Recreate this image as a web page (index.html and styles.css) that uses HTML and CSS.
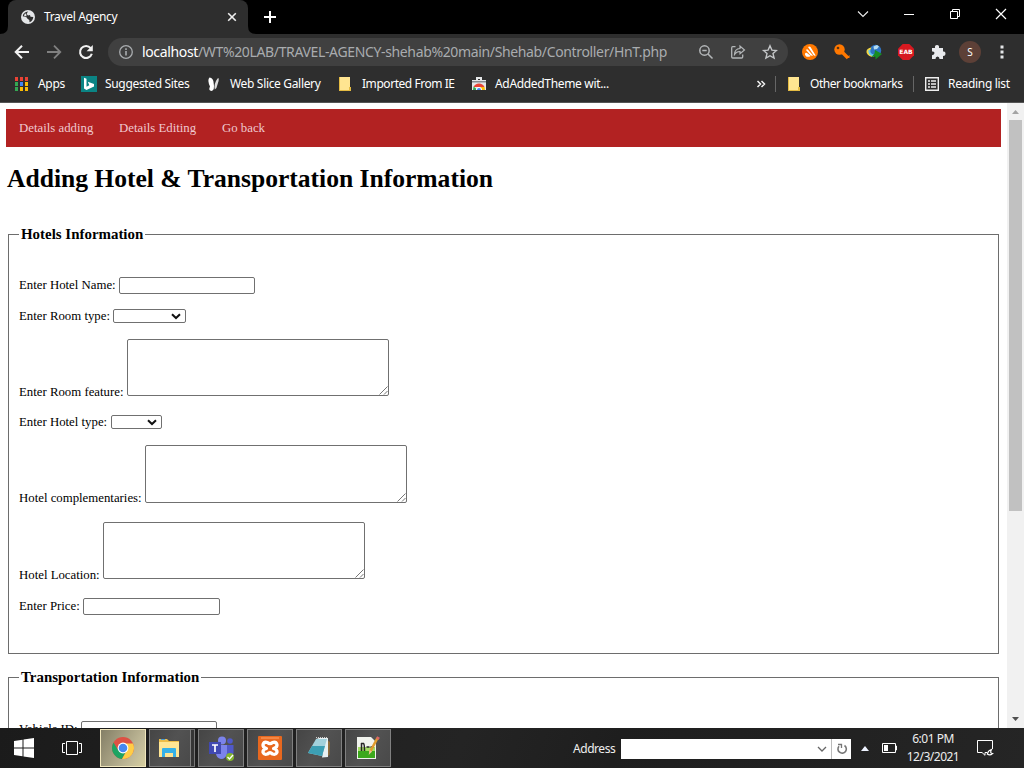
FILE: index.html
```html
<!DOCTYPE html>
<html lang="en">
<head>
<meta charset="utf-8">
<title>Travel Agency</title>
<link rel="stylesheet" href="styles.css">
</head>
<body>
<div class="screen">
  <header class="browser">
    <div class="tabs">
      <svg class="flare" width="8" height="8" viewBox="0 0 8 8"><path d="M8 0V8H0Q8 8 8 0Z" fill="#2e2e2e"/></svg>
      <div class="tab">
        <svg class="globe" width="14" height="14" viewBox="0 0 14 14"><circle cx="7" cy="7" r="7" fill="#e4e6e8"/><path d="M7.200 1.600Q4.500 4 7 5.500L9 5 9.500 6.800 12.300 7Q12 11 8.500 12.300L8.300 10 6.500 8.800 5.500 7.200 1.700 6.300Q2.300 2.200 7.200 1.600Z" fill="#2e2e2e"/><path d="M3.800 3.500 5.200 3.800 5.500 6.300 3 6.200Z" fill="#e4e6e8"/></svg>
        <span class="tab-title">Travel Agency</span>
        <svg width="10" height="10" viewBox="0 0 10 10"><path d="M1.200 1.200 8.800 8.800M8.800 1.200 1.200 8.800" stroke="#eee" stroke-width="1.600"/></svg>
      </div>
      <svg class="flare" width="8" height="8" viewBox="0 0 8 8"><path d="M0 0V8H8Q0 8 0 0Z" fill="#2e2e2e"/></svg>
      <svg class="plus" width="14" height="14" viewBox="0 0 14 14"><path d="M7 1V13M1 7H13" stroke="#fff" stroke-width="2"/></svg>
      <div class="window">
        <svg width="12" height="12" viewBox="0 0 12 12"><path d="M1 3.500 6 8.500 11 3.500" fill="none" stroke="#eee" stroke-width="1.100"/></svg>
        <svg width="12" height="12" viewBox="0 0 12 12"><path d="M1 6.500H11" stroke="#fff"/></svg>
        <svg width="12" height="12" viewBox="0 0 12 12"><path d="M1.500 3.500H8.500V10.500H1.500ZM3.500 3.500V1.500H10.500V8.500H8.500" fill="none" stroke="#fff"/></svg>
        <svg width="12" height="12" viewBox="0 0 12 12"><path d="M1 1 11 11M11 1 1 11" stroke="#fff" stroke-width="1.200"/></svg>
      </div>
    </div>
    <div class="toolbar">
      <div class="cells">
        <svg width="16" height="16" viewBox="0 0 16 16"><path d="M15 8H2.500M8 1.700 1.700 8 8 14.300" fill="none" stroke="#f1f1f1" stroke-width="2"/></svg>
        <svg width="16" height="16" viewBox="0 0 16 16"><path d="M1 8H13.500M8 1.700 14.300 8 8 14.300" fill="none" stroke="#808080" stroke-width="1.800"/></svg>
        <svg width="16" height="16" viewBox="0 0 16 16"><path d="M12.700 4.200A6 6 0 1 0 13.800 9.800" fill="none" stroke="#f1f1f1" stroke-width="2.100"/><path d="M14.800 1V7.200H8.600Z" fill="#f1f1f1"/></svg>
      </div>
      <div class="omnibox">
        <svg width="16" height="16" viewBox="0 0 16 16"><circle cx="8" cy="8" r="6.300" fill="none" stroke="#a9acaf" stroke-width="1.300"/><path d="M8 7V11.500M8 4.300V5.900" stroke="#a9acaf" stroke-width="1.600"/></svg>
        <span class="url"><b>localhost</b>/WT%20LAB/TRAVEL-AGENCY-shehab%20main/Shehab/Controller/HnT.php</span>
        <div class="cells">
          <svg width="16" height="16" viewBox="0 0 16 16"><circle cx="6.500" cy="6.500" r="4.700" fill="none" stroke="#b3b6b8" stroke-width="1.500"/><path d="M10 10 14.500 14.500M4.300 6.500H8.700" stroke="#b3b6b8" stroke-width="1.500"/></svg>
          <svg width="16" height="16" viewBox="0 0 16 16"><path d="M5.500 2.700H2.700Q1.700 2.700 1.700 4V13Q1.700 14 2.700 14H11.500Q12.700 14 12.700 13V10.500" fill="none" stroke="#b3b6b8" stroke-width="1.300"/><path d="M4.500 10.500Q4.500 5 10 4.500V2L14.500 6 10 9.800V7.500Q6.500 7.300 4.500 10.500Z" fill="none" stroke="#b3b6b8" stroke-width="1.200"/></svg>
          <svg width="16" height="16" viewBox="0 0 16 16"><path d="M8 1.800 9.900 6.100 14.500 6.500 11 9.600 12.100 14.100 8 11.700 3.900 14.100 5 9.600 1.500 6.500 6.100 6.100Z" fill="none" stroke="#c4c6c8" stroke-width="1.400"/></svg>
        </div>
      </div>
      <div class="cells extensions">
        <svg width="16" height="16" viewBox="0 0 16 16"><circle cx="8" cy="8" r="8" fill="#ff7800"/><path d="M6 3Q7.300 2 8.500 3L13.700 11.500Q12.500 12 11.500 11ZM4 6Q5 4.800 6 5.700L11 11.500Q9.500 12 8.500 11.200ZM3.300 9Q4.200 8.500 5 9L8.700 12Q5.500 13.700 3.700 12 2.500 10.500 3.300 9Z" fill="#fff"/></svg>
        <svg width="16" height="16" viewBox="0 0 16 16"><circle cx="5.500" cy="5.500" r="5.200" fill="#ff7800"/><path d="M7.500 7.500 14 14" stroke="#ff7800" stroke-width="3.400"/><path d="M12.500 14H15.500V11Z" fill="#ff7800"/><circle cx="4" cy="4" r="1.300" fill="#5b3515"/></svg>
        <svg width="16" height="16" viewBox="0 0 16 16"><circle cx="9.500" cy="6.500" r="5.700" fill="#2e74c4"/><path d="M7.500 2.500 11 1 13 2.500 11 5 8 5.500Z" fill="#b5dcf0"/><path d="M5.500 3.500Q-.5 4.500.7 9 2.500 13 8 13L7 11Q3 10 4 6.500Z" fill="#f6d842"/><path d="M3.500 6Q2.500 10.500 8 11.500" fill="none" stroke="#62c8ee" stroke-width="2"/><path d="M9 6 16 10 9.500 15.500 9.500 12.500 5.500 13 8.500 9.500Z" fill="#178c22"/></svg>
        <svg width="16" height="16" viewBox="0 0 16 16"><path d="M4.700 0H11.300L16 4.700V11.300L11.300 16H4.700L0 11.300V4.700Z" fill="#d71920"/><text x="8" y="10.300" class="eab" text-anchor="middle">EAB</text></svg>
        <svg width="16" height="16" viewBox="0 0 16 16"><path d="M2 4H5Q4.500 1 7 1T9 4H13V7.500Q15.500 7 15.500 9.500T13 12V15H9.500Q9.500 12.500 7.500 12.500T5.500 15H2V11.200Q4.500 11 4.500 9T2 7.500Z" fill="#e8eaed"/></svg>
        <span class="avatar">S</span>
        <svg width="16" height="16" viewBox="0 0 16 16"><path d="M6.500 1.500h3v3h-3ZM6.500 6.500h3v3h-3ZM6.500 11.500h3v3h-3Z" fill="#e4e6e8"/></svg>
      </div>
    </div>
    <div class="bookmarks">
      <svg width="13" height="14" viewBox="0 0 13 14"><path d="M0 0h3v4H0ZM5 0h3v4H5ZM10 0h3v4h-3Z" fill="#ea4335"/><path d="M0 5h3v4H0ZM0 10h3v4H0Z" fill="#34a853"/><path d="M5 5h3v4H5Z" fill="#4285f4"/><path d="M10 5h3v4h-3ZM5 10h3v4H5ZM10 10h3v4h-3Z" fill="#fbbc05"/></svg>
      <span class="apps">Apps</span>
      <svg width="16" height="16" viewBox="0 0 16 16"><path d="M0 0H16V16H0Z" fill="#0b8484"/><path d="M3 1.800 5.500 2.700V10.800L8.300 9.200 6.800 5.700 13 7.900V10.500L5.500 14 3 12.500Z" fill="#fff"/></svg>
      <span class="suggested">Suggested Sites</span>
      <svg width="16" height="16" viewBox="0 0 16 16"><path d="M3.500 1.500Q7.500 2 7.700 7.500 9 14 5.500 15 2 14.500 4 10.500 1 4 3.500 1.500Z" fill="#fff"/><path d="M8.800 13.500Q7.500 8 11.500 2.500L12.800 2.300Q13 5.500 11.500 8.500 11 12 8.800 13.500Z" fill="#ddd"/></svg>
      <span class="slice">Web Slice Gallery</span>
      <svg width="14" height="14" viewBox="0 0 14 14"><path d="M1 0H12V10L13 11V14H1Z" fill="#ffe591"/><path d="M11 10h2v4h-2ZM1 13h12v1H1ZM1 0h1v14H1Z" fill="#e4bb43"/></svg>
      <span class="imported">Imported From IE</span>
      <svg width="16" height="14" viewBox="0 0 16 14"><path d="M1 3H15V13H1ZM5 0h6v4H9V2H7v2H5Z" fill="#e5e7e9"/><path d="M1 4H15V5.500H1Z" fill="#858b90"/><path d="M2.500 10A6 6 0 0 1 13.500 10L8 10Z" fill="#ea4335"/><path d="M2.500 9.500 7 13H2Z" fill="#34a853"/><path d="M8 10H13.500L14 13H8Z" fill="#fbbc05"/><path d="M5 13A3 3 0 0 1 11 13Z" fill="#fff"/><path d="M6 13A2 2 0 0 1 10 13Z" fill="#4285f4"/></svg>
      <span class="theme">AdAddedTheme wit...</span>
      <svg width="10" height="10" viewBox="0 0 10 10"><path d="M1.500 2 4.500 5 1.500 8M5.500 2 8.500 5 5.500 8" fill="none" stroke="#f1f1f1" stroke-width="1.500"/></svg>
      <i class="rule"></i>
      <svg width="14" height="14" viewBox="0 0 14 14"><path d="M1 0H12V10L13 11V14H1Z" fill="#ffe591"/><path d="M11 10h2v4h-2ZM1 13h12v1H1ZM1 0h1v14H1Z" fill="#e4bb43"/></svg>
      <span class="other">Other bookmarks</span>
      <i class="rule"></i>
      <svg width="14" height="14" viewBox="0 0 14 14"><path d="M.7.7H13.300V13.300H.7Z" fill="none" stroke="#eee" stroke-width="1.400"/><path d="M3 4H5M6 4H11M3 7H5M6 7H11M3 10H5M6 10H11" stroke="#eee" stroke-width="1.500"/></svg>
      <span class="reading">Reading list</span>
    </div>
  </header>

  <div class="viewport">
    <main class="page">
      <nav class="menu"><a class="m1">Details adding</a><a class="m2">Details Editing</a><a>Go back</a></nav>
      <h1>Adding Hotel &amp; Transportation Information</h1>
      <fieldset class="hotels">
        <legend>Hotels Information</legend>
        <div class="row"><label class="l-name">Enter Hotel Name:</label><input class="name"></div>
        <div class="row short"><label class="l-room">Enter Room type:</label><span class="select room"><svg width="10" height="7" viewBox="0 0 10 7"><path d="M1 1.200 5 5 9 1.200" fill="none" stroke="#111" stroke-width="2"/></svg></span></div>
        <div class="row tall"><label class="l-feature">Enter Room feature:</label><span class="area"><textarea></textarea><svg width="9" height="9" viewBox="0 0 9 9"><path d="M.5 8.500 8.500.5M5 8.500 8.500 5" stroke="#666" stroke-width=".9"/></svg></span></div>
        <div class="row short after"><label class="l-type">Enter Hotel type:</label><span class="select type"><svg width="10" height="7" viewBox="0 0 10 7"><path d="M1 1.200 5 5 9 1.200" fill="none" stroke="#111" stroke-width="2"/></svg></span></div>
        <div class="row tall comp"><label class="l-comp">Hotel complementaries:</label><span class="area"><textarea></textarea><svg width="9" height="9" viewBox="0 0 9 9"><path d="M.5 8.500 8.500.5M5 8.500 8.500 5" stroke="#666" stroke-width=".9"/></svg></span></div>
        <div class="row tall after"><label class="l-location">Hotel Location:</label><span class="area"><textarea></textarea><svg width="9" height="9" viewBox="0 0 9 9"><path d="M.5 8.500 8.500.5M5 8.500 8.500 5" stroke="#666" stroke-width=".9"/></svg></span></div>
        <div class="row after"><label class="l-price">Enter Price:</label><input class="price"></div>
      </fieldset>
      <fieldset class="transport">
        <legend>Transportation Information</legend>
        <div class="row"><label class="l-vehicle">Vehicle ID:</label><input class="name"></div>
      </fieldset>
    </main>
    <aside class="scrollbar">
      <svg width="17" height="17" viewBox="0 0 17 17"><path d="M5 11 8.500 7 12 11Z" fill="#a3a3a3"/></svg>
      <div class="thumb"></div>
      <svg class="down" width="17" height="17" viewBox="0 0 17 17"><path d="M5 6 8.500 10 12 6Z" fill="#505050"/></svg>
    </aside>
  </div>

  <footer class="taskbar">
    <svg class="start" width="20" height="20" viewBox="0 0 20 20"><path d="M0 3 8.500 1.700V9.500H0ZM9.500 1.500 20 0V9.500H9.500ZM0 10.500H8.500V18.300L0 17ZM9.500 10.500H20V20L9.500 18.500Z" fill="#fff"/></svg>
    <svg class="views" width="20" height="16" viewBox="0 0 20 16"><path d="M4.500 1.500H15.500V14.500H4.500ZM3 3.500H.5V12.500H3M17 3.500H19.500V12.500H17" fill="none" stroke="#fff"/></svg>
    <div class="task active"><svg width="24" height="24" viewBox="0 0 24 24"><circle cx="12" cy="12" r="11" fill="#dd5144"/><path d="M2.500 6.500A11 11 0 0 0 11 23L16 14 12 12 7 14Z" fill="#1da462"/><path d="M11 23A11 11 0 0 0 22 7.500H12L16.500 13Z" fill="#ffcd46"/><circle cx="12" cy="12" r="5.400" fill="#fff"/><circle cx="12" cy="12" r="4.300" fill="#4688f1"/></svg></div>
    <div class="task files"><svg width="24" height="22" viewBox="0 0 24 22"><path d="M2 2H10L12 4H22V20H2Z" fill="#edbd49"/><path d="M2 5H22V20H2Z" fill="#ffe594"/><path d="M4 2.500H8" stroke="#4a9bd4"/><path d="M5 12Q5 11 6 11H18Q19 11 19 12V20H16V16H8V20H5Z" fill="#35b1e8"/></svg></div><i class="stack"></i>
    <div class="task"><svg width="26" height="26" viewBox="0 0 26 26"><circle cx="14" cy="5.500" r="4" fill="#7b83eb"/><circle cx="22" cy="6" r="2.800" fill="#5059c9"/><path d="M17 10H25.500V18Q25 21 21 21H17Z" fill="#5059c9"/><path d="M8 10H19V18Q18 24 13 24 8 23 8 18Z" fill="#7b83eb"/><path d="M1 7H13V19H1Z" fill="#4149b2"/><path d="M4 10H10M7 10V17" stroke="#fff" stroke-width="1.700"/><circle cx="22" cy="22" r="4" fill="#82b52d"/><path d="M19.500 22 21.500 24 25 20" fill="none" stroke="#fff" stroke-width="1.300"/></svg></div>
    <div class="task"><svg width="24" height="24" viewBox="0 0 24 24"><path d="M1 0H23Q24 0 24 1V23Q24 24 23 24H1Q0 24 0 23V1Q0 0 1 0Z" fill="#e8681f"/><path d="M3 2H21" stroke="#ffa66d"/><path d="M8.500 12.500Q4.500 11.500 5 8.500 6 5.500 9.500 6.500 12 9 14.500 6.500 18 5.500 19 8.500 19.500 11.500 15.500 12.500 19.500 13.500 19 16.500 18 19 14.500 18 12 15.500 9.500 18 6 19 5 16.500 4.500 13.500 8.500 12.500Z" fill="none" stroke="#fff" stroke-width="3.200" stroke-linejoin="round"/></svg></div>
    <div class="task"><svg width="24" height="24" viewBox="0 0 24 24"><path d="M20 4 23 6 22.500 19 19 21Z" fill="#8f6c3c"/><path d="M9 2H21L21 21 15 21.500 18 5Z" fill="#e7f0f2"/><path d="M9 3 20 3 15 20 1 17Z" fill="#a2d1dc"/><path d="M5 10 18 10 15 20 1 17Z" fill="#3c9fb4"/><path d="M9 1.500H21" stroke="#ccc" stroke-dasharray="1 1"/></svg></div>
    <div class="task"><svg width="24" height="24" viewBox="0 0 24 24"><path d="M1 1H15L20 6V23H1Z" fill="#f1f3ed"/><path d="M2 11H19V16H2Z" fill="#a4dd64"/><path d="M2 15H19V22H2Z" fill="#3ca81c"/><path d="M5.500 7V15M5 7.500H7.500Q8.500 8 8.500 15M10.500 11H13.500M14.500 11H17.500" fill="none" stroke="#252525" stroke-width="1.500"/><path d="M21.500 2 14 16" stroke="#e09c2e" stroke-width="2.600"/><path d="M13.500 14 12.700 19 16 15.500Z" fill="#e9c797"/><path d="M22.500 1 21.300 3.300" stroke="#db6764" stroke-width="3"/></svg></div>
    <span class="addr">Address</span>
    <div class="address"><svg width="10" height="7" viewBox="0 0 10 7"><path d="M1 1 5 5 9 1" fill="none" stroke="#666" stroke-width="1.300"/></svg><span class="refresh"><svg width="12" height="12" viewBox="0 0 12 12"><path d="M8.500 2.500A4.200 4.200 0 1 1 3 3.200" fill="none" stroke="#777" stroke-width="1.600"/><path d="M2 1.500H5.500V5" fill="none" stroke="#777" stroke-width="1.300"/></svg></span></div>
    <svg class="up" width="8" height="5" viewBox="0 0 8 5"><path d="M0 5 4 0 8 5Z" fill="#eef3ff"/></svg>
    <svg class="battery" width="16" height="10" viewBox="0 0 16 10"><path d="M.5.5H13.500V9.500H.5ZM14 3H14.500V7H14" fill="none" stroke="#fff"/><path d="M2 2H6V8H2Z" fill="#fff"/></svg>
    <div class="clock"><span class="time">6:01 PM</span><span class="date">12/3/2021</span></div>
    <svg class="notice" width="17" height="16" viewBox="0 0 17 16"><path d="M15.500 9V.5H.5V12.500H5L8 15.300V12.500H10" fill="none" stroke="#fff"/><path d="M14.500 9.500Q11 10.500 10.300 14 13 16 15.500 13.500 12.500 13.500 14.500 9.500Z" fill="none" stroke="#fff" stroke-width="1.200"/></svg>
  </footer>
</div>
</body>
</html>
```
FILE: styles.css
```css
* { box-sizing: border-box; }
body { margin: 0; }
svg { display: block; flex: none; }
.screen { width: 1024px; height: 768px; overflow: hidden; display: flex; flex-direction: column; font: 12px "Noto Sans", "Open Sans", sans-serif; }
.browser { height: 103px; flex: none; background: #2e2e2e; border-bottom: 1px solid #555; color: #fff; }
.tabs { height: 34px; display: flex; align-items: center; background: #000; }
.flare { align-self: flex-end; }
.tab { width: 240px; height: 34px; display: flex; align-items: center; padding: 0 11px 0 13px; background: #2e2e2e; border-radius: 8px 8px 0 0; }
.tab-title { width: 183px; margin-left: 9px; margin-right: auto; padding-bottom: 1px; white-space: nowrap; letter-spacing: -.35px; }
.plus { margin-left: 7px; }
.window { display: flex; margin-left: auto; height: 34px; padding-top: 8px; }
.window svg { margin: 0 17px; }
.toolbar { height: 36px; display: flex; align-items: center; padding-left: 6px; }
.cells { display: flex; align-items: center; }
.cells > svg { margin: 0 8px; }
.omnibox { width: 680px; height: 28px; margin-left: 6px; display: flex; align-items: center; padding: 0 2px 0 10px; border-radius: 14px; background: #404040; }
.url { flex: 1; margin-left: 8px; padding-bottom: 1px; white-space: nowrap; font-size: 14px; letter-spacing: -.355px; color: #a9acaf; }
.url b { font-weight: 400; color: #fff; }
.extensions { margin-left: 6px; }
.eab { font: bold 6px "DejaVu Sans", sans-serif; fill: #fff; }
.avatar { width: 22px; height: 22px; margin: 0 5px; border-radius: 50%; background: #5d4037; font-size: 10px; line-height: 22px; text-align: center; }
.bookmarks { height: 28px; display: grid; align-items: center; padding-left: 15px; white-space: nowrap; letter-spacing: -.33px; grid-template-columns: 23px 43px 24px 101px 24px 108px 24px 109px 24px 261px 19px 12px 23px 103px 12px 23px 70px; }
.bookmarks span { padding-bottom: 1px; }
.imported, .other { letter-spacing: -.45px; }
.rule { width: 1px; height: 16px; background: #666; }
.viewport { height: 625px; flex: none; display: flex; background: #fff; overflow: hidden; }
.page { width: 1007px; padding: 6px 6px 0; overflow: hidden; font: 12.8px "Liberation Serif", serif; color: #000; }
.menu { height: 38px; display: flex; align-items: center; padding-left: 13px; background: #b22222; color: #efc8cf; }
.m1 { width: 100px; }
.m2 { width: 103px; }
h1 { margin: 17px 0 0 1px; font-size: 25.6px; line-height: 30px; font-weight: 700; letter-spacing: -.02px; }
fieldset { width: 991px; margin: 0 0 0 2px; padding: 0 10px; border: 1px solid #6d6d6d; }
legend { height: 16px; padding: 0 2px; font-size: 14.93px; line-height: 16px; font-weight: 700; white-space: nowrap; }
.hotels { height: 428px; margin-top: 32px; }
.transport { height: 200px; margin-top: 15px; }
.row { height: 17px; margin-top: 15px; display: flex; align-items: center; white-space: nowrap; }
legend + .row { margin-top: 35px; }
.transport legend + .row { margin-top: 36px; }
.short { height: 15px; }
.tall { height: 57px; align-items: flex-end; }
.comp { height: 58px; }
.after { margin-top: 19px; }
.tall label { line-height: 15px; margin-bottom: -4px; }
.comp label { margin-bottom: -3px; }
.l-name { width: 100px; }
.l-room { width: 94px; }
.l-feature { width: 108px; }
.l-type { width: 92px; }
.l-comp { width: 126px; }
.l-location { width: 84px; }
.l-price { width: 64px; }
.l-vehicle { width: 62px; }
input, textarea, .select { display: block; margin: 0; padding: 0; border: 1px solid #707070; border-radius: 2px; background: #fff; }
.name { width: 136px; height: 17px; }
.price { width: 137px; height: 17px; }
.select { height: 14px; align-self: flex-start; display: flex; align-items: center; justify-content: flex-end; padding-right: 4px; }
.room { width: 73px; }
.type { width: 51px; }
.area { position: relative; height: 100%; }
textarea { width: 262px; height: 100%; resize: none; }
.area svg { position: absolute; right: 1px; bottom: 1px; }
.scrollbar { width: 17px; display: flex; flex-direction: column; background: #f1f1f1; }
.thumb { width: 13px; height: 391px; margin-left: 2px; background: #c1c1c1; }
.down { margin-top: auto; }
.taskbar { height: 40px; flex: none; display: flex; align-items: center; padding-left: 14px; background: linear-gradient(110deg, #1b1b1b, #242424 45%, #1e1e1e 60%, #252525); color: #eee; }
.views { margin: 0 18px 0 28px; }
.task { width: 46px; height: 38px; margin-right: 3px; flex: none; display: flex; align-items: center; justify-content: center; border: 1px solid #808080; background: linear-gradient(120deg, #454545, #525252 50%, #494949); }
.active { background: linear-gradient(120deg, #847f66, #c2bb99 75%, #d6ce9e); border-color: #f0e6bc; }
.files { width: 42px; margin-right: 0; padding-right: 2px; }
.stack { width: 4px; height: 38px; margin-right: 3px; border: 1px solid #777; border-left: 0; background: #353535; }
.addr { width: 48px; margin-left: 179px; letter-spacing: -.45px; }
.address { width: 230px; height: 20px; display: flex; align-items: center; justify-content: flex-end; background: #fff; margin-top: 2px; }
.refresh { width: 20px; height: 20px; margin-left: 4px; padding: 4px; border-left: 1px solid #bbb; }
.up { margin-left: 10px; }
.battery { margin-left: 13px; }
.clock { width: 60px; margin-left: 5px; display: flex; flex-direction: column; align-items: center; line-height: 18px; letter-spacing: -.5px; }
.notice { margin-left: 14px; }
```
